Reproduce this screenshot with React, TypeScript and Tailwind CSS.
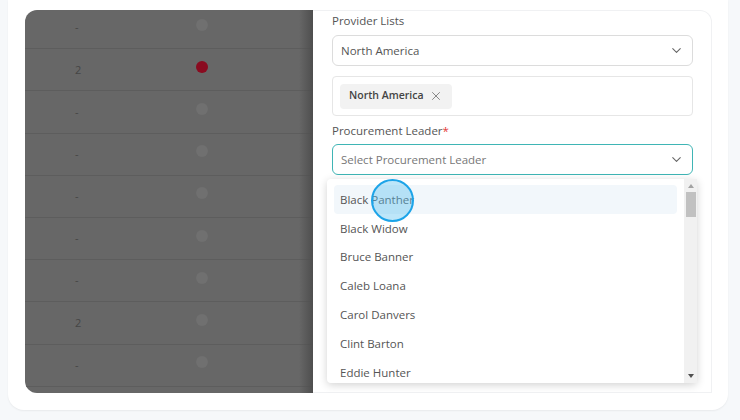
import { ChevronDown, X } from 'lucide-react'

const ROWS = [
  { v: '-', red: false },
  { v: '2', red: true },
  { v: '-', red: false },
  { v: '-', red: false },
  { v: '-', red: false },
  { v: '-', red: false },
  { v: '-', red: false },
  { v: '2', red: false },
  { v: '-', red: false },
]

const LEADERS = [
  'Black Panther',
  'Black Widow',
  'Bruce Banner',
  'Caleb Loana',
  'Carol Danvers',
  'Clint Barton',
  'Eddie Hunter',
]

function DimmedTable() {
  return (
    <div className="relative w-[288px] shrink-0 overflow-hidden rounded-l-xl bg-[#676767]">
      <div className="-mt-[3px]">
        {ROWS.map((r, i) => (
          <div key={i} className="flex h-[42.2px] items-center border-b border-[#5d5d5d]">
            <span className="w-[106px] pl-[50px] text-[11px] text-[#454545]">{r.v}</span>
            <span
              className={`-mt-[6px] ml-[65px] h-3 w-3 rounded-full ${r.red ? 'bg-[#8a0b20]' : 'bg-[#707070]'}`}
            />
          </div>
        ))}
      </div>
      <div className="absolute inset-y-0 right-0 w-[14px] bg-gradient-to-r from-transparent to-[#4e4e4e]" />
    </div>
  )
}

function Drawer() {
  return (
    <div className="relative flex-1 rounded-tr-xl border border-l-0 border-[#f0f1f3] bg-white pl-[19px] pr-[18px] pt-[2px] text-[#555]">
      <label className="block text-[11.5px] leading-4">Provider Lists</label>
      <div className="mt-[6px] flex h-[31px] items-center justify-between rounded-md border border-[#dcdcdc] pl-2 pr-[8px] text-[11.5px] text-[#555]">
        <span>North America</span>
        <ChevronDown size={15} strokeWidth={1.7} className="text-[#666]" />
      </div>
      <div className="mt-[10px] flex h-[40px] items-center rounded border border-[#e6e6e6] px-[7px]">
        <div className="flex h-[25px] items-center gap-[5px] rounded bg-[#f2f2f2] px-[9px] text-[10.5px] font-semibold text-[#444]">
          North America
          <X size={14} strokeWidth={1.3} className="text-[#666]" />
        </div>
      </div>
      <label className="mt-[7px] block text-[11.5px] leading-4">
        Procurement Leader<span className="text-[#e53935]">*</span>
      </label>
      <div className="mt-[5px] flex h-[31px] items-center justify-between rounded-md border border-[#3fb5b5] pl-2 pr-[8px] text-[11.5px] text-[#777]">
        <span>Select Procurement Leader</span>
        <ChevronDown size={15} strokeWidth={1.7} className="text-[#666]" />
      </div>

      <div className="absolute left-[14px] top-[168px] flex h-[204px] w-[370px] rounded bg-white shadow-[0_2px_8px_rgba(0,0,0,0.18)]">
        <ul className="flex-1 px-[7px] pt-[6px]">
          {LEADERS.map((name, i) => (
            <li
              key={name}
              className={`flex h-[28.8px] items-center rounded pl-[6px] text-[11.5px] text-[#555] ${i === 0 ? 'bg-[#f2f7fb]' : ''}`}
            >
              {name}
            </li>
          ))}
        </ul>
        <div className="flex w-[13px] flex-col items-center bg-[#f1f1f1]">
          <span className="mt-[5px] h-0 w-0 border-x-[3px] border-b-[4px] border-x-transparent border-b-[#a3a3a3]" />
          <span className="mt-[4px] h-[25px] w-[10px] bg-[#c1c1c1]" />
          <span className="mt-auto mb-[5px] h-0 w-0 border-x-[3px] border-t-[4px] border-x-transparent border-t-[#505050]" />
        </div>
      </div>

      <div className="absolute left-[58px] top-[168px] h-[43px] w-[43px] rounded-full border-2 border-[#1da4e8] bg-[#5bc0f0]/40" />
    </div>
  )
}

export default function App() {
  return (
    <div className="h-[420px] w-[740px] overflow-hidden bg-[#f6f8fa] font-['Open_Sans',sans-serif]">
      <div className="ml-2 flex h-[410px] w-[720px] rounded-b-2xl bg-white pb-[17px] pl-[17px] pr-[16px] pt-[10px] shadow-[0_1px_2px_rgba(0,0,0,0.06)]">
        <DimmedTable />
        <Drawer />
      </div>
    </div>
  )
}
